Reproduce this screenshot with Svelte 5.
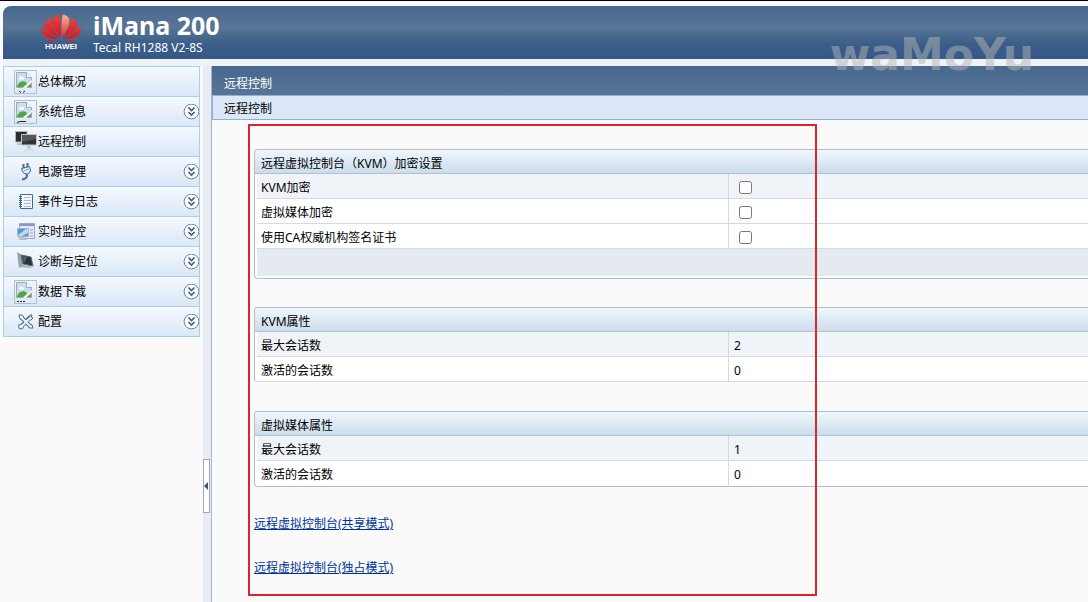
<script>
    let selected = "remote";
    let collapsed = false;

    const menu = [
        { id: "overview", label: "总体概况", icon: "broken", sub: false },
        { id: "system", label: "系统信息", icon: "broken", sub: true },
        { id: "remote", label: "远程控制", icon: "screens", sub: false },
        { id: "power", label: "电源管理", icon: "plug", sub: true },
        { id: "events", label: "事件与日志", icon: "book", sub: true },
        { id: "monitor", label: "实时监控", icon: "windows", sub: true },
        { id: "diagnose", label: "诊断与定位", icon: "panel", sub: true },
        { id: "download", label: "数据下载", icon: "broken", sub: true },
        { id: "config", label: "配置", icon: "tools", sub: true },
    ];

    let encryption = [
        { id: "kvm", label: "KVM加密", checked: false },
        { id: "media", label: "虚拟媒体加密", checked: false },
        { id: "ca", label: "使用CA权威机构签名证书", checked: false },
    ];

    const sessions = [
        { title: "KVM属性", open: true, max: 2, active: 0 },
        { title: "虚拟媒体属性", open: false, max: 1, active: 0 },
    ];
</script>

<div class="page">
    <header class="banner">
        <div class="logo">
            <svg width="40" height="28" viewBox="0 0 40 28">
                <defs>
                    <linearGradient id="petal" x1="0" y1="0" x2="0" y2="1">
                        <stop offset="0" stop-color="#ee4238" />
                        <stop offset="1" stop-color="#d3131b" />
                    </linearGradient>
                    <linearGradient id="petal-light" x1="0" y1="0" x2="0" y2="1">
                        <stop offset="0" stop-color="#f9b39a" />
                        <stop offset="1" stop-color="#e02a26" />
                    </linearGradient>
                </defs>
                <g fill="url(#petal)" stroke="#4a6a92" stroke-width=".4">
                    <path d="M19.500 24C13 16 10.500 9 11.500 5C12.500 2.200 15.500 .6 18.400 .5C19.800 6 20 16 19.500 24Z" />
                    <path d="M20.500 24C27 16 29.500 9 28.500 5C27.500 2.200 24.500 .6 21.600 .5C20.200 6 20 16 20.500 24Z" fill="url(#petal-light)" />
                    <path d="M18.500 24.500C9 19.500 3.800 14.500 4 10.200C4.200 7.200 6.300 5 9.500 4C11 11 14 18 18.500 24.500Z" />
                    <path d="M21.500 24.500C31 19.500 36.200 14.500 36 10.200C35.800 7.200 33.700 5 30.500 4C29 11 26 18 21.500 24.500Z" />
                    <path d="M17.500 25.200C8 24.800 2.500 22.500 .8 18.500C0 16 .5 13 2 11.300C5.500 17 11.500 22 17.500 25.200Z" />
                    <path d="M22.500 25.200C32 24.800 37.500 22.500 39.200 18.500C40 16 39.500 13 38 11.300C34.500 17 28.500 22 22.500 25.200Z" />
                    <path d="M17 26C11 28.600 6 28.500 3.500 24.300C8 25.900 12 26 17 26Z" />
                    <path d="M23 26C29 28.600 34 28.500 36.500 24.300C32 25.900 28 26 23 26Z" />
                </g>
            </svg>
            <span class="brand">HUAWEI</span>
        </div>
        <div class="product">
            <h1>iMana 200</h1>
            <p>Tecal RH1288 V2-8S</p>
        </div>
        <div class="watermark">waMoYu</div>
    </header>

    <div class="body">
        {#if !collapsed}
            <nav class="menu">
                {#each menu as item}
                    <a
                        href="#{item.id}"
                        aria-current={selected == item.id ? "page" : undefined}
                        on:click={() => (selected = item.id)}
                    >
                        <svg class="icon" width="24" height="24" viewBox="0 0 24 24" fill="none">
                            {#if item.icon == "broken"}
                                <path d="M.5 .5H22.500V23.500H.5Z" stroke="#b9bcc0" />
                                <path d="M2.500 2.500H12.500L17.500 7.500V17.500H2.500Z" fill="#c8dcf5" stroke="#a3a9b0" />
                                <path d="M12.500 2.500V7.500H17.500" fill="#fff" stroke="#a3a9b0" />
                                <path d="M5 9C5 7 7 6 8 7C10 7 11 9 9 9.500H5Z" fill="#fff" />
                                <path d="M3 17C4 12 8 10 12 12L13 14L9 17Z" fill="#4fa83d" />
                                <path d="M9 18L18 10V12L12 18Z" fill="#f4f8fd" />
                                <path d="M13 17L17 13.500V17Z" fill="#4fa83d" />
                                {#if item.id == "overview"}
                                    <path d="M5 21L7 22.500M9 22.500L11 21" stroke="#222" />
                                {:else if item.id == "system"}
                                    <path d="M3 22.500L6 21.500H12" stroke="#222" />
                                {:else}
                                    <path d="M3 21.500H11" stroke="#222" stroke-dasharray="2 1" />
                                {/if}
                            {:else if item.icon == "screens"}
                                <path d="M1.500 1.500H13V12H1.500Z" fill="#2c2c2e" stroke="#b0b3b8" />
                                <path d="M7.500 4.500H22.500V15H7.500Z" fill="#333335" stroke="#c4c6ca" />
                                <path d="M8 5H22V9L8 12Z" fill="#565658" />
                                <path d="M3 14H8M13 17H17" stroke="#9b9da0" />
                                <path d="M11 22C11 17 19 17 19 22M13 20H17M15 18V21" stroke="#d4cfcd" />
                            {:else if item.icon == "plug"}
                                <path d="M7.500 8.500L15.500 6.500L16.500 10C16.500 13 14 14.500 12 14C9 13.500 8 11.500 7.500 8.500Z" fill="#dbe8f6" stroke="#46698f" />
                                <path d="M9.500 8V4M13.500 7V3" stroke="#46698f" stroke-width="2" />
                                <path d="M9 11L15 9" stroke="#8ba6c4" />
                                <path d="M12.500 14C14 17 12 19 8 19.500" stroke="#46698f" stroke-width="2" />
                            {:else if item.icon == "book"}
                                <path d="M6.500 4.500H18.500V18.500H6.500Z" fill="#f4f8fd" stroke="#48698f" />
                                <path d="M5 6.500H8M5 8.500H8M5 10.500H8M5 12.500H8M5 14.500H8M5 16.500H8" stroke="#48698f" />
                                <path d="M10 7.500H17M10 10.500H17M10 13.500H17M10 16.500H17" stroke="#a9bdd5" />
                            {:else if item.icon == "windows"}
                                <path d="M5.500 3.500H20.500V18.500H5.500Z" fill="#e3e7fa" stroke="#9fa6ce" />
                                <path d="M6 4H20V6H6Z" fill="#8b93d6" />
                                <path d="M3.500 8.500H14.500V16.500H3.500Z" fill="#6095cc" stroke="#a7b7c9" />
                                <path d="M4 15L12 9H14V13L8 16H4Z" fill="#b9dcf4" />
                                <path d="M7 17H11L13 20H5Z" fill="#b8bec6" />
                                <path d="M16 10H19M16 13H19M16 16H19" stroke="#a4aac6" />
                            {:else if item.icon == "panel"}
                                <path d="M3 2L8 5L9 16L5 18Z" fill="#9ba0a4" />
                                <path d="M7 5L17 7L19 16L9 14Z" fill="#25343d" stroke="#5c6a70" />
                                <path d="M8 6L13 7L10 13Z" fill="#4d626e" />
                                <path d="M6 17L10 15L19 17L16 18Z" fill="#aab0b4" />
                            {:else}
                                <path d="M7 7L17 17M16 7L7 17" stroke="#49698e" stroke-width="4" />
                                <circle cx="7" cy="16.500" r="2.500" fill="#eef5fc" stroke="#49698e" />
                                <path d="M5 5L8 5L10 7L8 9L6 9Z" fill="#eef5fc" stroke="#49698e" />
                                <path d="M15 8L16 5L18 5L17 7L19 8L17 10L15 10Z" fill="#eef5fc" stroke="#49698e" />
                                <path d="M15 15L18 15L19 18L16 18Z" fill="#eef5fc" stroke="#49698e" />
                                <path d="M7 7L17 17M16 8L7 17" stroke="#eef5fc" stroke-width="2" />
                            {/if}
                        </svg>
                        <span>{item.label}</span>
                        {#if item.sub}
                            <svg class="more" width="16" height="16" viewBox="0 0 16 16" fill="none">
                                <circle cx="8.500" cy="7.500" r="7.400" fill="#fcfdff" stroke="#6f7f91" />
                                <path d="M5.500 3.500L8.500 6.500L11.500 3.500M5.500 8L8.500 11L11.500 8" stroke="#3d5a80" stroke-width="1.600" />
                            </svg>
                        {/if}
                    </a>
                {/each}
            </nav>
        {/if}

        <div class="splitter">
            <button aria-label="toggle menu" on:click={() => (collapsed = !collapsed)}>
                <svg width="4" height="8" viewBox="0 0 4 8">
                    <path d="M4 0V8L0 4Z" fill="#35547c" />
                </svg>
            </button>
        </div>

        <main>
            <div class="title">远程控制</div>
            <div class="tab">远程控制</div>

            <div class="content">
                <form class="panel">
                    <h2>远程虚拟控制台（KVM）加密设置</h2>
                    <table>
                        <tbody>
                            {#each encryption as row}
                                <tr>
                                    <td><label for={row.id}>{row.label}</label></td>
                                    <td class="check">
                                        <input type="checkbox" id={row.id} bind:checked={row.checked} />
                                    </td>
                                </tr>
                            {/each}
                        </tbody>
                    </table>
                    <div class="actions"></div>
                </form>

                {#each sessions as s}
                    <section class="panel" class:open={s.open}>
                        <h2>{s.title}</h2>
                        <table>
                            <tbody>
                                <tr>
                                    <td>最大会话数</td>
                                    <td>{s.max}</td>
                                </tr>
                                <tr>
                                    <td>激活的会话数</td>
                                    <td>{s.active}</td>
                                </tr>
                            </tbody>
                        </table>
                    </section>
                {/each}

                <div class="links">
                    <a href="#shared">远程虚拟控制台(共享模式)</a>
                    <a href="#private">远程虚拟控制台(独占模式)</a>
                </div>
            </div>
            <div class="highlight"></div>
        </main>
    </div>
</div>

<style>
    :global(body) {
        background: #fafafa;
        overflow: hidden;
    }
    .page {
        display: flex;
        flex-direction: column;
        min-height: 100vh;
        box-sizing: border-box;
        border-top: 1px solid #000;
        padding: 5px 0 0 3px;
        font-family: "Noto Sans", "Noto Sans CJK SC", sans-serif;
        font-size: 12px;
        line-height: 16px;
        color: #000;
    }
    .banner {
        position: relative;
        display: flex;
        height: 53px;
        border-bottom: 7px solid #eef3f7;
        border-top-left-radius: 8px;
        background: linear-gradient(#486890, #587595 40%, #3a5e88 72%, #35588a);
        background-clip: padding-box;
        color: #fff;
    }
    .logo {
        display: flex;
        flex-direction: column;
        align-items: center;
        width: 40px;
        padding: 8px 0 0 38px;
    }
    .brand {
        font-family: "Liberation Sans", sans-serif;
        font-weight: bold;
        font-size: 8px;
        line-height: 10px;
    }
    .product {
        padding-left: 12px;
    }
    h1 {
        margin: 0;
        padding-top: 3px;
        font-size: 25px;
        line-height: 32px;
    }
    .product p {
        margin: 0;
        line-height: 14px;
    }
    .watermark {
        position: absolute;
        top: 24px;
        right: 54px;
        z-index: 2;
        font-family: "DejaVu Sans", sans-serif;
        font-weight: bold;
        font-size: 44px;
        line-height: 50px;
        color: rgba(180, 180, 180, 0.5);
        pointer-events: none;
    }
    .body {
        display: flex;
        flex: 1;
    }
    .menu {
        width: 197px;
        box-sizing: border-box;
        border: 1px solid #a5d2e6;
        border-bottom: none;
        align-self: flex-start;
    }
    .menu a {
        display: flex;
        align-items: center;
        height: 29px;
        padding-left: 10px;
        border-bottom: 1px solid #a5d2e6;
        background: linear-gradient(#f5f9fe, #dae7f7);
        color: #000;
        text-decoration: none;
    }
    .menu span {
        flex: 1;
    }
    .splitter {
        width: 8px;
        margin-left: 3px;
        background: #e6ecf2;
    }
    .splitter button {
        display: flex;
        align-items: center;
        justify-content: flex-start;
        width: 7px;
        height: 54px;
        margin: 393px 0 0;
        padding: 0;
        border: 1px solid #a0a8b4;
        background: #fff;
    }
    main {
        position: relative;
        flex: 1;
        border-left: 1px solid #a9b6cb;
    }
    .title {
        height: 29px;
        padding-left: 12px;
        background: linear-gradient(#486890, #587595);
        color: #fff;
        line-height: 36px;
    }
    .tab {
        height: 23px;
        padding-left: 11px;
        border: 1px solid #8fb0dc;
        border-right: none;
        background: #dce8f8;
        line-height: 26px;
    }
    .content {
        padding: 29px 0 24px 42px;
    }
    .panel {
        margin-bottom: 28px;
        border: 1px solid #b4bcc6;
        border-right: none;
        border-radius: 4px 0 0 4px;
        background: #fff;
        overflow: hidden;
    }
    .panel.open {
        border-bottom-color: #fafafa;
    }
    h2 {
        height: 23px;
        margin: 0;
        padding-left: 6px;
        border-bottom: 1px solid #b0c0d4;
        background: linear-gradient(#f0f7fd, #cbdcea);
        font-size: 12px;
        font-weight: normal;
        line-height: 27px;
    }
    table {
        width: 100%;
        padding-left: 2px;
        border-spacing: 0;
        table-layout: fixed;
    }
    td {
        box-sizing: border-box;
        height: 25px;
        padding: 4px 5px 0;
        border-bottom: 1px solid #d5dae0;
    }
    td:first-child {
        width: 56.8%;
        padding-left: 4px;
        border-right: 1px solid #d5dae0;
    }
    tr:first-child td {
        background: #f0f4f9;
    }
    section tr:last-child td {
        border-bottom-color: #fff;
    }
    .open tr:last-child td {
        border-bottom-color: #d5dae0;
    }
    .check {
        padding: 2px 10px 0;
    }
    label {
        display: block;
    }
    input {
        display: block;
        width: 13px;
        height: 13px;
        margin: 0;
    }
    .actions {
        height: 27px;
        margin: 0 0 2px 2px;
        background: #e5eaf1;
    }
    .links {
        display: flex;
        flex-direction: column;
        align-items: flex-start;
        gap: 28px;
        padding-top: 1px;
    }
    .links a {
        color: #003399;
    }
    /* frame drawn over the settings area */
    .highlight {
        position: absolute;
        top: 58px;
        left: 36px;
        width: 65%;
        height: 472px;
        box-sizing: border-box;
        border: 2px solid #d9252d;
        pointer-events: none;
    }
</style>
